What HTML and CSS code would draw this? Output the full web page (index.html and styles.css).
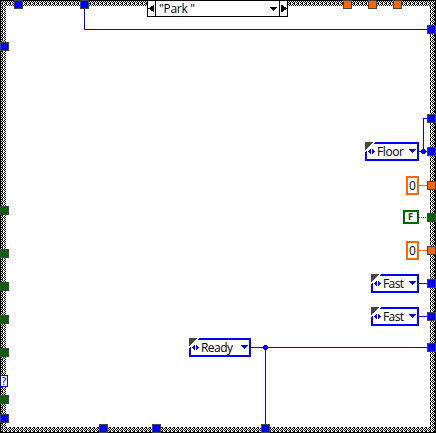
FILE: index.html
```
<!DOCTYPE html>
<html lang="en">
<head>
<meta charset="utf-8">
<title>Case structure</title>
<link rel="stylesheet" href="styles.css">
</head>
<body>
<svg class="diagram" width="436" height="433" viewBox="0 0 436 433">
  <defs>
    <pattern id="weave" width="4" height="4" patternUnits="userSpaceOnUse">
      <path fill="#fff" d="M0 0h4v4H0z"/>
      <path d="M0 0h1v1H0zM2 0h1v1H2zM1 1h1v1H1zM3 1h1v1H3zM0 2h1v1H0zM2 2h1v1H2zM1 3h2v1H1z"/>
    </pattern>
    <rect id="t" x=".5" y=".5" width="8" height="8"/>
    <path id="enum" class="arrows" d="M3 9h1V8h1V7h1v5H5v-1H4v-1H3zM7 7h1v1h1v1h1v1H9v1H8v1H7z"/>
    <g id="corner"><path class="gap" d="M0 0h10L0 10z"/><path class="corner" d="M0 0h8v1H7v1H6v1H5v1H4v1H3v1H2v1H1v1H0z"/></g>
    <path id="drop" d="M0 0h7v1H6v1H5v1H4v1H3V3H2V2H1V1H0z"/>
  </defs>

  <path class="frame" fill-rule="evenodd" d="M0 0h436v433H0zM6 6v421h424V6z"/>
  <path d="M0 0h436v1H0zM0 0h1v433H0zM435 0h1v433h-1zM0 432h436v1H0z"/>

  <g class="wire">
    <path d="M84.5 9v20.5H427M419 151.5h8M423.5 151.5v-33h4M419 283.5h8M419 316.5h8M251 347.5h176M265.5 347v77"/>
    <path class="double" d="M419 185.5h8M419 250.5h8"/>
    <path class="bool" d="M419 217.5h8"/>
  </g>
  <path class="blue" d="M422 149h3v1h1v3h-1v1h-3v-1h-1v-3h1zM264 345h3v1h1v3h-1v1h-3v-1h-1v-3h1z"/>

  <g class="terminal blue">
    <use href="#t" x="14"/><use href="#t" x="80"/><use href="#t" y="42"/><use href="#t" y="414"/>
    <use href="#t" x="427" y="25"/><use href="#t" x="427" y="114"/><use href="#t" x="427" y="147"/>
    <use href="#t" x="427" y="279"/><use href="#t" x="427" y="312"/><use href="#t" x="427" y="343"/>
    <use href="#t" x="99" y="424"/><use href="#t" x="152" y="424"/><use href="#t" x="261" y="424"/>
  </g>
  <g class="terminal orange">
    <use href="#t" x="343"/><use href="#t" x="368"/><use href="#t" x="393"/>
    <use href="#t" x="427" y="181"/><use href="#t" x="427" y="246"/>
  </g>
  <g class="terminal green">
    <use href="#t" y="206"/><use href="#t" y="249"/><use href="#t" y="282"/><use href="#t" y="315"/>
    <use href="#t" y="348"/><use href="#t" y="395"/><use href="#t" x="427" y="213"/>
  </g>

  <g class="selector">
    <rect x="147.5" y=".5" width="140" height="16"/>
    <path class="rule" d="M155.5 0v17M279.5 0v17"/>
    <path class="glyph" d="M148 8.5l6-4v8zM287 8.5l-6-4v8z"/>
    <use href="#drop" x="270" y="7"/>
    <text x="159" y="13" textLength="36">"Park "</text>
  </g>

  <g transform="translate(365 142)">
    <rect class="box" x="1" y="1" width="52" height="17"/>
    <use href="#corner"/><use href="#enum"/>
    <text x="12" y="14" textLength="27">Floor</text><use class="blue" href="#drop" x="44" y="7"/>
  </g>
  <g transform="translate(371 274)">
    <rect class="box" x="1" y="1" width="46" height="17"/>
    <use href="#corner"/><use href="#enum"/>
    <text x="12" y="14" textLength="21">Fast</text><use class="blue" href="#drop" x="38" y="7"/>
  </g>
  <g transform="translate(371 307)">
    <rect class="box" x="1" y="1" width="46" height="17"/>
    <use href="#corner"/><use href="#enum"/>
    <text x="12" y="14" textLength="21">Fast</text><use class="blue" href="#drop" x="38" y="7"/>
  </g>
  <g transform="translate(189 338)">
    <rect class="box" x="1" y="1" width="60" height="17"/>
    <use href="#corner"/><use href="#enum"/>
    <text x="12" y="14" textLength="32">Ready</text><use class="blue" href="#drop" x="52" y="7"/>
  </g>

  <rect class="box number" x="407" y="177" width="11" height="17"/><text x="409" y="190" textLength="7">0</text>
  <rect class="box number" x="407" y="242" width="11" height="17"/><text x="409" y="255" textLength="7">0</text>
  <rect class="box boolean" x="404" y="211" width="14" height="12"/><text class="flag" x="408" y="220">F</text>
  <rect class="query" x=".5" y="375.5" width="7" height="11"/><text class="question" x="1.2" y="385">?</text>
</svg>
</body>
</html>
```
FILE: styles.css
```
body { margin: 0; background: #fff; overflow: hidden; }
.diagram { display: block; shape-rendering: crispEdges; font: 12px "Open Sans", "Noto Sans", sans-serif; }
.diagram text { white-space: pre; }
.frame { fill: url(#weave); }
.wire { fill: none; stroke: #00f; stroke-width: 1; }
.double { stroke: #ff6600; }
.bool { stroke: #006600; stroke-dasharray: 1 1; }
.terminal { stroke: #444; stroke-width: 1; }
.blue { fill: #00f; }
.orange { fill: #ff6600; }
.green { fill: #006600; }
.selector rect { fill: #fff; stroke: #000; }
.rule { stroke: #000; }
.box { fill: #fff; stroke: #00f; stroke-width: 2; }
.number { stroke: #ff6600; }
.boolean { stroke: #006600; }
.gap { fill: #fff; }
.corner { fill: #444; }
.arrows { fill: #00f; }
.diagram .flag { font: bold 8px "DejaVu Sans", sans-serif; fill: #006600; }
.query { fill: #ffffdc; stroke: #00f; }
.diagram .question { font: 10px "DejaVu Sans", sans-serif; fill: #00f; }
```
